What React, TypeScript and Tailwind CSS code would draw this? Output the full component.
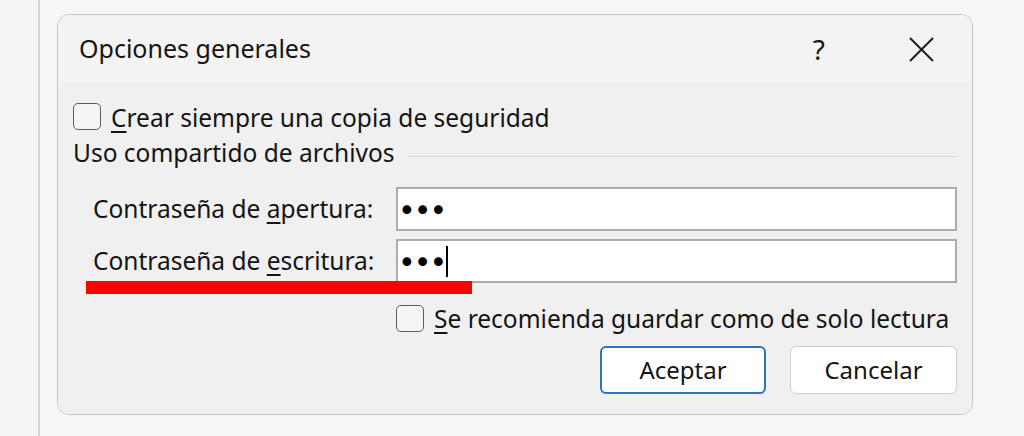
import React from "react";

function Checkbox() {
  return <div className="h-[27px] w-[28px] shrink-0 rounded-[5px] border-[1.5px] border-[#5c5c5c] bg-[#f4f4f4]" />;
}

function Dots() {
  return <span className="mt-[4px] font-['DejaVu_Sans'] text-[30px] leading-none tracking-[-2px] text-black">•••</span>;
}

export default function App() {
  return (
    <div className="relative flex h-[436px] w-[1024px] overflow-hidden bg-[#f6f6f6] font-['Noto_Sans',sans-serif] text-[#141414]">
      <div className="w-[40px] shrink-0 border-r-2 border-[#d4d4d4] bg-[#f4f4f4]" />
      <div className="pl-[17px] pt-[14px]">
        <div className="flex h-[401px] w-[916px] flex-col overflow-hidden rounded-[12px] border-[1.5px] border-[#c4c4c4]">
          {/* title bar */}
          <div className="flex h-[68px] shrink-0 items-center bg-[#f3f3f3] pl-[21px] pr-[38px]">
            <span className="flex-1 text-[25px]">Opciones generales</span>
            <span className="text-[28px] leading-none">?</span>
            <svg className="ml-[84px]" width="25" height="25" viewBox="0 0 25 25">
              <path d="M1 1 L24 24 M24 1 L1 24" stroke="#1c1c1c" strokeWidth="2" />
            </svg>
          </div>
          {/* body */}
          <div className="flex flex-1 flex-col bg-[#f0f0f0] px-[15px] text-[24.5px]">
            <div className="mt-[20px] flex h-[27px] items-center gap-[10px]">
              <Checkbox />
              <span className="pt-[4px]">
                <span className="underline decoration-[2px] underline-offset-[4px]">C</span>rear siempre una copia de seguridad
              </span>
            </div>
            <div className="mt-[9px] flex h-[28px] items-center">
              <span>Uso compartido de archivos</span>
              <div className="mr-[-1px] ml-[13px] mt-[6px] h-px flex-1 bg-[#d9d9d9]" />
            </div>
            <div className="mt-[20px] grid grid-cols-[323px_1fr] gap-y-[8px]">
              <div className="flex h-[44px] items-center pl-[20px]">
                <span>
                  Contraseña de <span className="underline decoration-[2px] underline-offset-[4px]">a</span>pertura:
                </span>
              </div>
              <div className="flex h-[44px] items-center border-2 border-[#ababab] bg-white">
                <Dots />
              </div>
              <div className="flex h-[44px] items-center pl-[20px]">
                <span>
                  Contraseña de <span className="underline decoration-[2px] underline-offset-[4px]">e</span>scritura:
                </span>
              </div>
              <div className="flex h-[44px] items-center border-2 border-[#ababab] bg-white">
                <Dots />
                <div className="ml-[1px] h-[31px] w-[2px] bg-black" />
              </div>
            </div>
            <div className="mt-[21px] ml-[323px] flex h-[28px] items-center gap-[10px]">
              <Checkbox />
              <span className="pt-[3px]">
                <span className="underline decoration-[2px] underline-offset-[4px]">S</span>e recomienda guardar como de solo lectura
              </span>
            </div>
            <div className="mt-[14px] flex justify-end gap-[24px] text-[24px]">
              <button className="flex h-[48px] w-[166px] items-center justify-center rounded-[6px] border-2 border-[#2f73bf] bg-white">
                Aceptar
              </button>
              <button className="flex h-[48px] w-[167px] items-center justify-center rounded-[6px] border-[1.5px] border-[#cdcdcd] bg-white">
                Cancelar
              </button>
            </div>
          </div>
        </div>
      </div>
      <div className="absolute left-[86px] top-[281px] h-[13px] w-[386px] bg-[#ff0000]" />
    </div>
  );
}
